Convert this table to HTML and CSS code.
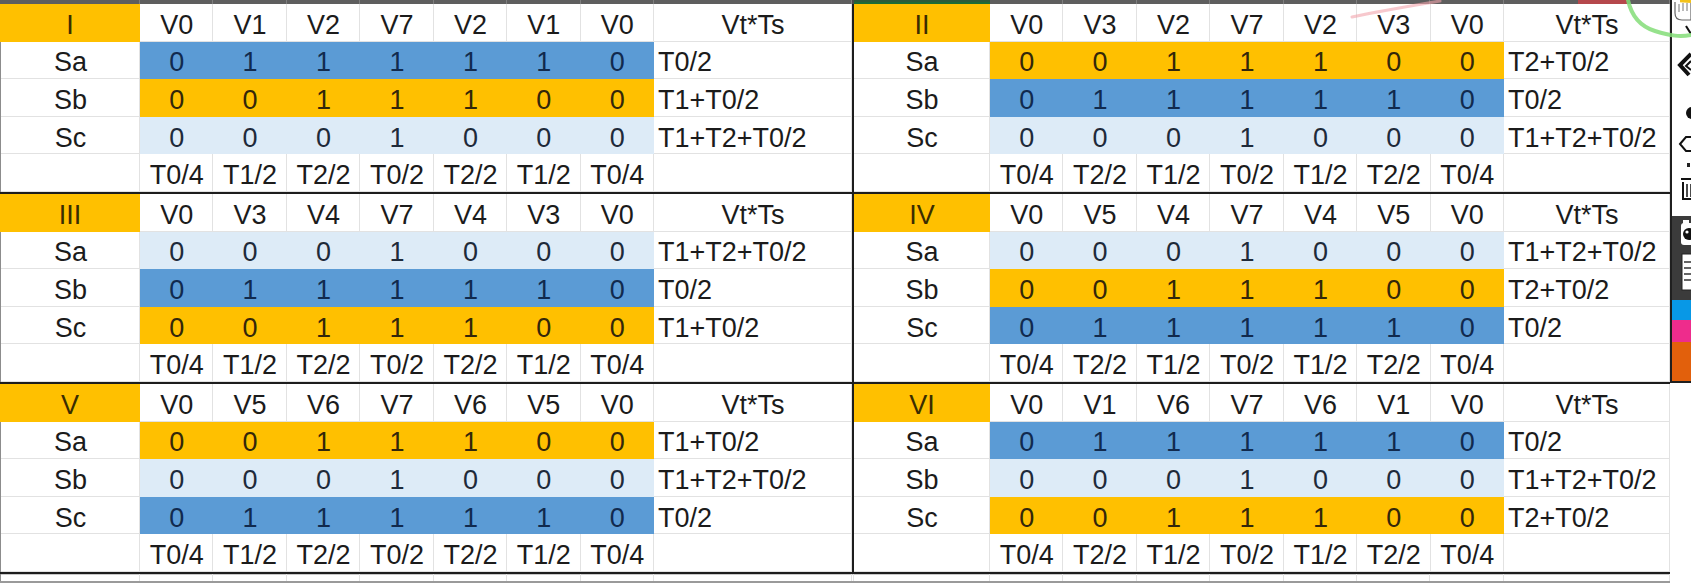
FILE: index.html
```html
<!DOCTYPE html>
<html lang="zh-CN">
<head>
<meta charset="utf-8">
<title>SVPWM 扇区开关表</title>
<link rel="stylesheet" href="styles.css">
</head>
<body>
<div class="screen">
  <div class="sheet">
    <div class="strip">
      <div class="s"></div><div class="s"></div><div class="s"></div><div class="s"></div><div class="s"></div><div class="s"></div><div class="s"></div><div class="s"></div><div class="s"></div>
      <div class="s gap"></div>
      <div class="s sel"></div><div class="s"></div><div class="s"></div><div class="s"></div><div class="s"></div><div class="s"></div><div class="s"></div><div class="s"></div><div class="s last"><span class="red"></span></div>
    </div>

    <div class="blocks">
      <!-- I -->
      <div class="blk l">
        <div class="c hl">I</div><div class="c">V0</div><div class="c">V1</div><div class="c">V2</div><div class="c">V7</div><div class="c">V2</div><div class="c">V1</div><div class="c">V0</div><div class="c">Vt*Ts</div>
        <div class="c lab">Sa</div><div class="c b">0</div><div class="c b">1</div><div class="c b">1</div><div class="c b">1</div><div class="c b">1</div><div class="c b">1</div><div class="c b">0</div><div class="c vt">T0/2</div>
        <div class="c lab">Sb</div><div class="c o">0</div><div class="c o">0</div><div class="c o">1</div><div class="c o">1</div><div class="c o">1</div><div class="c o">0</div><div class="c o">0</div><div class="c vt">T1+T0/2</div>
        <div class="c lab">Sc</div><div class="c lb">0</div><div class="c lb">0</div><div class="c lb">0</div><div class="c lb">1</div><div class="c lb">0</div><div class="c lb">0</div><div class="c lb">0</div><div class="c vt">T1+T2+T0/2</div>
        <div class="c lab"></div><div class="c">T0/4</div><div class="c">T1/2</div><div class="c">T2/2</div><div class="c">T0/2</div><div class="c">T2/2</div><div class="c">T1/2</div><div class="c">T0/4</div><div class="c"></div>
      </div>
      <!-- II -->
      <div class="blk r">
        <div class="c hl">II</div><div class="c">V0</div><div class="c">V3</div><div class="c">V2</div><div class="c">V7</div><div class="c">V2</div><div class="c">V3</div><div class="c">V0</div><div class="c">Vt*Ts</div>
        <div class="c">Sa</div><div class="c o">0</div><div class="c o">0</div><div class="c o">1</div><div class="c o">1</div><div class="c o">1</div><div class="c o">0</div><div class="c o">0</div><div class="c vt">T2+T0/2</div>
        <div class="c">Sb</div><div class="c b">0</div><div class="c b">1</div><div class="c b">1</div><div class="c b">1</div><div class="c b">1</div><div class="c b">1</div><div class="c b">0</div><div class="c vt">T0/2</div>
        <div class="c">Sc</div><div class="c lb">0</div><div class="c lb">0</div><div class="c lb">0</div><div class="c lb">1</div><div class="c lb">0</div><div class="c lb">0</div><div class="c lb">0</div><div class="c vt">T1+T2+T0/2</div>
        <div class="c"></div><div class="c">T0/4</div><div class="c">T2/2</div><div class="c">T1/2</div><div class="c">T0/2</div><div class="c">T1/2</div><div class="c">T2/2</div><div class="c">T0/4</div><div class="c"></div>
      </div>
      <!-- III -->
      <div class="blk l">
        <div class="c hl">III</div><div class="c">V0</div><div class="c">V3</div><div class="c">V4</div><div class="c">V7</div><div class="c">V4</div><div class="c">V3</div><div class="c">V0</div><div class="c">Vt*Ts</div>
        <div class="c lab">Sa</div><div class="c lb">0</div><div class="c lb">0</div><div class="c lb">0</div><div class="c lb">1</div><div class="c lb">0</div><div class="c lb">0</div><div class="c lb">0</div><div class="c vt">T1+T2+T0/2</div>
        <div class="c lab">Sb</div><div class="c b">0</div><div class="c b">1</div><div class="c b">1</div><div class="c b">1</div><div class="c b">1</div><div class="c b">1</div><div class="c b">0</div><div class="c vt">T0/2</div>
        <div class="c lab">Sc</div><div class="c o">0</div><div class="c o">0</div><div class="c o">1</div><div class="c o">1</div><div class="c o">1</div><div class="c o">0</div><div class="c o">0</div><div class="c vt">T1+T0/2</div>
        <div class="c lab"></div><div class="c">T0/4</div><div class="c">T1/2</div><div class="c">T2/2</div><div class="c">T0/2</div><div class="c">T2/2</div><div class="c">T1/2</div><div class="c">T0/4</div><div class="c"></div>
      </div>
      <!-- IV -->
      <div class="blk r">
        <div class="c hl">IV</div><div class="c">V0</div><div class="c">V5</div><div class="c">V4</div><div class="c">V7</div><div class="c">V4</div><div class="c">V5</div><div class="c">V0</div><div class="c">Vt*Ts</div>
        <div class="c">Sa</div><div class="c lb">0</div><div class="c lb">0</div><div class="c lb">0</div><div class="c lb">1</div><div class="c lb">0</div><div class="c lb">0</div><div class="c lb">0</div><div class="c vt">T1+T2+T0/2</div>
        <div class="c">Sb</div><div class="c o">0</div><div class="c o">0</div><div class="c o">1</div><div class="c o">1</div><div class="c o">1</div><div class="c o">0</div><div class="c o">0</div><div class="c vt">T2+T0/2</div>
        <div class="c">Sc</div><div class="c b">0</div><div class="c b">1</div><div class="c b">1</div><div class="c b">1</div><div class="c b">1</div><div class="c b">1</div><div class="c b">0</div><div class="c vt">T0/2</div>
        <div class="c"></div><div class="c">T0/4</div><div class="c">T2/2</div><div class="c">T1/2</div><div class="c">T0/2</div><div class="c">T1/2</div><div class="c">T2/2</div><div class="c">T0/4</div><div class="c"></div>
      </div>
      <!-- V -->
      <div class="blk l">
        <div class="c hl">V</div><div class="c">V0</div><div class="c">V5</div><div class="c">V6</div><div class="c">V7</div><div class="c">V6</div><div class="c">V5</div><div class="c">V0</div><div class="c">Vt*Ts</div>
        <div class="c lab">Sa</div><div class="c o">0</div><div class="c o">0</div><div class="c o">1</div><div class="c o">1</div><div class="c o">1</div><div class="c o">0</div><div class="c o">0</div><div class="c vt">T1+T0/2</div>
        <div class="c lab">Sb</div><div class="c lb">0</div><div class="c lb">0</div><div class="c lb">0</div><div class="c lb">1</div><div class="c lb">0</div><div class="c lb">0</div><div class="c lb">0</div><div class="c vt">T1+T2+T0/2</div>
        <div class="c lab">Sc</div><div class="c b">0</div><div class="c b">1</div><div class="c b">1</div><div class="c b">1</div><div class="c b">1</div><div class="c b">1</div><div class="c b">0</div><div class="c vt">T0/2</div>
        <div class="c lab"></div><div class="c">T0/4</div><div class="c">T1/2</div><div class="c">T2/2</div><div class="c">T0/2</div><div class="c">T2/2</div><div class="c">T1/2</div><div class="c">T0/4</div><div class="c"></div>
      </div>
      <!-- VI -->
      <div class="blk r">
        <div class="c hl">VI</div><div class="c">V0</div><div class="c">V1</div><div class="c">V6</div><div class="c">V7</div><div class="c">V6</div><div class="c">V1</div><div class="c">V0</div><div class="c">Vt*Ts</div>
        <div class="c">Sa</div><div class="c b">0</div><div class="c b">1</div><div class="c b">1</div><div class="c b">1</div><div class="c b">1</div><div class="c b">1</div><div class="c b">0</div><div class="c vt">T0/2</div>
        <div class="c">Sb</div><div class="c lb">0</div><div class="c lb">0</div><div class="c lb">0</div><div class="c lb">1</div><div class="c lb">0</div><div class="c lb">0</div><div class="c lb">0</div><div class="c vt">T1+T2+T0/2</div>
        <div class="c">Sc</div><div class="c o">0</div><div class="c o">0</div><div class="c o">1</div><div class="c o">1</div><div class="c o">1</div><div class="c o">0</div><div class="c o">0</div><div class="c vt">T2+T0/2</div>
        <div class="c"></div><div class="c">T0/4</div><div class="c">T2/2</div><div class="c">T1/2</div><div class="c">T0/2</div><div class="c">T1/2</div><div class="c">T2/2</div><div class="c">T0/4</div><div class="c"></div>
      </div>
    </div>

    <div class="tail">
      <div class="t first"></div><div class="t"></div><div class="t"></div><div class="t"></div><div class="t"></div><div class="t"></div><div class="t"></div><div class="t"></div><div class="t"></div>
      <div class="t"></div>
      <div class="t"></div><div class="t"></div><div class="t"></div><div class="t"></div><div class="t"></div><div class="t"></div><div class="t"></div><div class="t"></div><div class="t"></div>
    </div>
  </div>

  <div class="toolbar">
    <div class="tb-light">
      <svg class="tb-icons" width="19" height="216" viewBox="0 0 19 216">
        <rect x="8" y="0" width="11" height="3" fill="#f3c21a"/>
        <path d="M3 2 V13 Q3 20 10 20 H19 V3" fill="#fff" stroke="#666" stroke-width="1.2"/>
        <path d="M7 4 V12 M11 3 V11 M15 3 V11" stroke="#777" stroke-width="1"/>
        <path d="M14 26 L19 34" stroke="#111" stroke-width="2"/>
        <path d="M19 54 L8 65 L17 75" fill="none" stroke="#111" stroke-width="4" stroke-linejoin="miter"/>
        <path d="M19 61 L14 66 L19 70" fill="none" stroke="#111" stroke-width="2"/>
        <circle cx="20" cy="113" r="6" fill="#111"/>
        <path d="M8 144 L14 137 H21 V151 H14 Z" fill="#fff" stroke="#111" stroke-width="2"/>
        <rect x="15" y="163" width="3" height="4" fill="#222"/>
        <path d="M9 179 H21" stroke="#111" stroke-width="2"/>
        <path d="M11 182 V199 H21" fill="none" stroke="#111" stroke-width="2"/>
        <path d="M15 184 V197 M19 184 V197" stroke="#111" stroke-width="1.5"/>
      </svg>
    </div>
    <div class="tb-dark">
      <svg class="tb-icons" width="19" height="84" viewBox="0 0 19 84">
        <rect x="11" y="4" width="6" height="4" fill="#fff"/>
        <rect x="9" y="7" width="14" height="22" rx="3" fill="#fff"/>
        <circle cx="17" cy="18" r="6" fill="#111"/>
        <circle cx="15" cy="16" r="1.6" fill="#fff"/>
        <rect x="10" y="38" width="14" height="36" fill="#fff" stroke="#222" stroke-width="1"/>
        <path d="M12 46 H19 M12 52 H19 M12 58 H19 M12 64 H19" stroke="#333" stroke-width="1.5"/>
      </svg>
    </div>
    <div class="sw sw-blue"></div>
    <div class="sw sw-pink"></div>
    <div class="sw sw-orange"></div>
  </div>

  <svg class="ink" width="351" height="60" viewBox="1340 0 351 60">
    <path d="M1352 17 C1380 11 1410 6 1440 1" fill="none" stroke="#f2a3ab" stroke-width="3" stroke-linecap="round" opacity="0.6"/>
    <path d="M1628 0 C1631 14 1639 26 1655 31 S1680 37 1691 35" fill="none" stroke="#84dd78" stroke-width="4" stroke-linecap="round" opacity="0.85"/>
  </svg>
</div>
</body>
</html>
```

FILE: styles.css
```css
html, body {
  margin: 0;
  padding: 0;
  background: #ffffff;
}

body {
  font-family: "Liberation Sans", Arial, "Noto Sans CJK SC", sans-serif;
  font-size: 27px;
  color: #1b1b1b;
}

.screen {
  position: relative;
  display: flex;
  width: 1691px;
  height: 583px;
  overflow: hidden;
  background: #ffffff;
}

.sheet {
  flex: none;
  width: 1670px;
  display: flex;
  flex-direction: column;
}

/* column-header remnant at the very top */
.strip {
  display: grid;
  grid-template-columns: 140px repeat(7, 73.43px) 198px 2px 136px repeat(7, 73.43px) 166px;
  height: 4px;
  background: #5e5e5e;
}

.strip .s {
  box-shadow: inset -1px 0 0 #7e7e7e;
}

.strip .gap {
  box-shadow: none;
  background: #4a4a4a;
}

.strip .sel {
  background: #2c5a3a;
  box-shadow: inset 0 -2px 0 #1c6b36;
}

.strip .last {
  display: flex;
}

.strip .red {
  margin-left: 74px;
  width: 49px;
  background: #b5484c;
}

/* the six sector tables */
.blocks {
  display: grid;
  grid-template-columns: 852px 816px;
  gap: 2px;
  padding-bottom: 2px;
  background: #1d1d1d;
}

.blk {
  display: grid;
  grid-template-rows: repeat(5, 37.6px);
  background: #ffffff;
}

.blk.l {
  grid-template-columns: 140px repeat(7, 1fr) 198px;
}

.blk.r {
  grid-template-columns: 136px repeat(7, 1fr) 166px;
}

.c {
  display: flex;
  align-items: center;
  justify-content: center;
  box-sizing: border-box;
  padding-top: 5px;
  white-space: nowrap;
  overflow: hidden;
  box-shadow: inset -1px -1px 0 #e2e2e2;
}

.c.lab {
  border-left: 1px solid #8c8c8c;
}

.c.vt {
  justify-content: flex-start;
  padding-left: 4px;
}

.c.hl {
  background: #ffc000;
  box-shadow: none;
  color: #3a2d00;
}

.c.o {
  background: #ffc000;
  box-shadow: none;
  color: #33270a;
}

.c.b {
  background: #5b9bd5;
  box-shadow: none;
  color: #112a4e;
}

.c.lb {
  background: #ddebf7;
  box-shadow: none;
  color: #1e2a3a;
}

/* partial next row at the bottom */
.tail {
  flex: 1;
  display: grid;
  grid-template-columns: 140px repeat(7, 73.43px) 198px 2px 136px repeat(7, 73.43px) 166px;
  border-bottom: 2px solid #9a9a9a;
  box-sizing: border-box;
}

.tail .t {
  box-shadow: inset -1px 0 0 #e2e2e2, inset 0 1px 0 #c8c8c8;
}

.tail .first {
  border-left: 1px solid #8c8c8c;
}

/* annotation toolbar on the right edge */
.toolbar {
  flex: none;
  width: 21px;
  height: 383px;
  box-sizing: border-box;
  border-left: 2px solid #1f1f1f;
  border-bottom: 2px solid #1f1f1f;
  display: flex;
  flex-direction: column;
}

.tb-icons {
  display: block;
}

.tb-light {
  height: 216px;
  background: #ffffff;
}

.tb-dark {
  height: 84px;
  background: #3b3b3b;
}

.sw {
  flex: none;
}

.sw-blue {
  height: 20px;
  background: #0898e6;
}

.sw-pink {
  height: 22px;
  background: #ee2c8c;
}

.sw-orange {
  flex: 1;
  background: #e2600c;
}

/* pen strokes drawn over the screen */
.ink {
  position: absolute;
  left: 1340px;
  top: 0;
  pointer-events: none;
}
```
